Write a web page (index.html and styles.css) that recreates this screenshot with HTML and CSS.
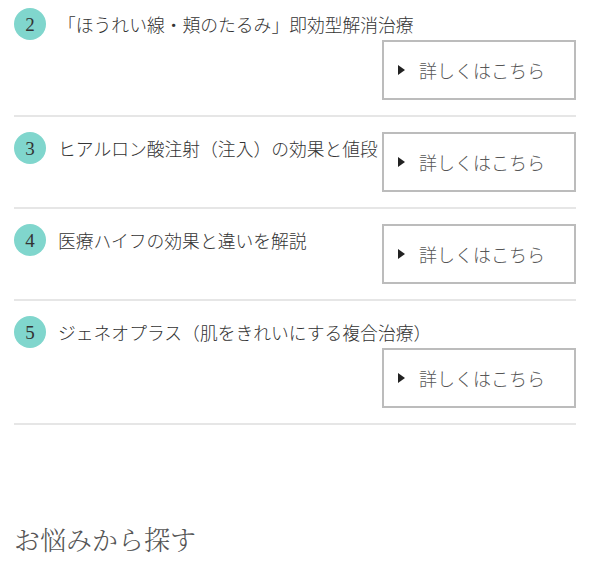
FILE: index.html
```html
<!DOCTYPE html>
<html lang="ja">
<head>
    <meta charset="UTF-8">
    <meta name="viewport" content="width=device-width, initial-scale=1.0">
    <title>施術メニュー</title>
    <link rel="stylesheet" href="styles.css">
</head>
<body>
    <div class="page">
        <!-- ランキング一覧 -->
        <ul class="rank-list">
            <li class="rank-item">
                <span class="rank-num">2</span><span class="rank-title">「ほうれい線・頬のたるみ」即効型解消治療</span><a href="#" class="more-btn"><span class="arrow"></span>詳しくはこちら</a>
            </li>
            <li class="rank-item">
                <span class="rank-num">3</span><span class="rank-title">ヒアルロン酸注射（注入）の効果と値段</span><a href="#" class="more-btn"><span class="arrow"></span>詳しくはこちら</a>
            </li>
            <li class="rank-item">
                <span class="rank-num">4</span><span class="rank-title">医療ハイフの効果と違いを解説</span><a href="#" class="more-btn"><span class="arrow"></span>詳しくはこちら</a>
            </li>
            <li class="rank-item">
                <span class="rank-num">5</span><span class="rank-title">ジェネオプラス（肌をきれいにする複合治療）</span><a href="#" class="more-btn"><span class="arrow"></span>詳しくはこちら</a>
            </li>
        </ul>

        <h2 class="section-title">お悩みから探す</h2>
    </div>
</body>
</html>
```

FILE: styles.css
```css
body {
    margin: 0;
    background-color: #fff;
    font-family: "Noto Sans CJK JP", "Noto Sans", sans-serif;
    color: #333;
}

.page {
    width: 562px;
    margin: -9px 0 0 14px;
}

.rank-list {
    list-style: none;
    margin: 0;
    padding: 0;
}

.rank-item {
    display: flow-root;
    padding: 15px 0;
    border-top: 2px solid #e6e6e6;
    line-height: 32px;
    white-space: nowrap;
}

.rank-item:last-child {
    border-bottom: 2px solid #e6e6e6;
}

.rank-num {
    display: inline-block;
    width: 32px;
    height: 32px;
    margin-right: 12px;
    border-radius: 50%;
    background-color: #80d6cd;
    font-family: "Liberation Serif", "DejaVu Serif", serif;
    font-size: 19px;
    line-height: 33px;
    text-align: center;
    color: #333;
    vertical-align: top;
}

.rank-title {
    font-size: 17.8px;
    font-weight: 300;
    vertical-align: top;
    letter-spacing: 0;
}

.more-btn {
    float: right;
    display: flex;
    align-items: center;
    width: 194px;
    height: 60px;
    box-sizing: border-box;
    padding-left: 14px;
    border: 2px solid #bcbcbc;
    background-color: #fff;
    color: #555;
    font-size: 18px;
    font-weight: 300;
    text-decoration: none;
}

.arrow {
    width: 0;
    height: 0;
    margin-right: 14px;
    border-top: 5px solid transparent;
    border-bottom: 5px solid transparent;
    border-left: 7px solid #222;
}

.section-title {
    margin: 94px 0 0;
    font-family: "Noto Serif CJK JP", "Liberation Serif", serif;
    font-size: 26px;
    font-weight: 300;
    line-height: 39px;
    color: #555;
}
```
